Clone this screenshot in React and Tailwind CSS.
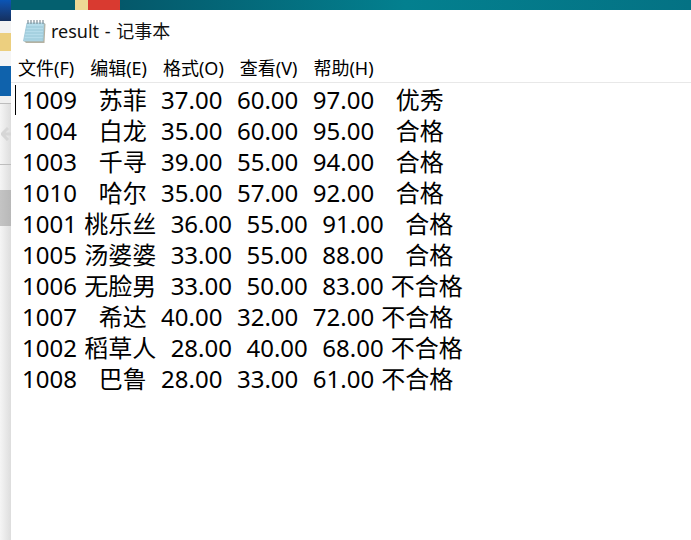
const rows = [
  "1009   苏菲  37.00  60.00  97.00   优秀",
  "1004   白龙  35.00  60.00  95.00   合格",
  "1003   千寻  39.00  55.00  94.00   合格",
  "1010   哈尔  35.00  57.00  92.00   合格",
  "1001 桃乐丝  36.00  55.00  91.00   合格",
  "1005 汤婆婆  33.00  55.00  88.00   合格",
  "1006 无脸男  33.00  50.00  83.00 不合格",
  "1007   希达  40.00  32.00  72.00 不合格",
  "1002 稻草人  28.00  40.00  68.00 不合格",
  "1008   巴鲁  28.00  33.00  61.00 不合格",
];

function NotepadIcon() {
  return (
    <svg width="24" height="25" viewBox="0 0 24 25" className="shrink-0">
      <path d="M22 4 L23.5 5 L22.5 24 L4 24 L2 22 L20 21 Z" fill="#b5b2a2" />
      <path d="M5 4 L22 4 L21 22 L1.5 22 Z" fill="#b5dcea" stroke="#9cc5d6" strokeWidth="0.8" />
      <path d="M4 8 H21 M3.6 11 H21 M3.2 14 H21 M2.8 17 H21 M2.4 20 H21" stroke="#8fc0d2" strokeWidth="0.8" />
      <path d="M6 1 V5 M9 1 V5 M12 1 V5 M15 1 V5 M18 1 V5 M21 1 V5" stroke="#7f8f98" strokeWidth="1.2" />
    </svg>
  );
}

export default function App() {
  const font = { fontFamily: '"Noto Sans", "Noto Sans CJK SC", sans-serif' };
  return (
    <div className="w-[691px] h-[540px] overflow-hidden flex bg-white" style={font}>
      <div className="w-[11px] shrink-0 flex flex-col">
        <div className="h-[21px] bg-gradient-to-b from-[#0a55b5] to-[#14305f]" />
        <div className="h-[12px] bg-[#f3f3f3]" />
        <div className="h-[18px] bg-[#eccf7f]" />
        <div className="h-[15px] bg-[#f5f5f5]" />
        <div className="h-[30px] bg-[#0f62ac]" />
        <div className="h-[8px] bg-[#f0f0f0] border-b border-[#bdbdbd]" />
        <div className="h-[61px] flex items-center bg-gradient-to-r from-[#f5f5f5] to-[#dddddd] border-b border-[#bdbdbd]">
          <svg width="10" height="14" viewBox="0 0 10 14" className="ml-[1px]">
            <path d="M7 1 L1 7 L7 13 M1 7 H10" fill="none" stroke="#d6d6d6" strokeWidth="3" />
          </svg>
        </div>
        <div className="h-[25px] bg-gradient-to-r from-[#f5f5f5] to-[#dddddd]" />
        <div className="h-[36px] bg-gradient-to-r from-[#c4c4c4] to-[#b8b8b8]" />
        <div className="flex-1 bg-gradient-to-r from-[#f5f5f5] to-[#dddddd]" />
      </div>
      <div className="flex-1 flex flex-col min-w-0">
        <div className="h-[10px] shrink-0 flex bg-[#046d80]">
          <div className="w-[64px] bg-[#04606f]" />
          <div className="w-[13px] bg-[#eed995]" />
          <div className="w-[32px] bg-[#d93a30]" />
          <div className="flex-1 bg-gradient-to-r from-[#04586a] via-[#03808f] to-[#047284]" />
        </div>
        <div className="h-[43px] shrink-0 flex items-center pl-[11px] gap-[5px] text-[18px] text-[#111]">
          <NotepadIcon />
          <span className="whitespace-pre [word-spacing:1px]">result - 记事本</span>
        </div>
        <div className="h-[30px] shrink-0 flex items-center pl-[7px] pt-[1px] gap-[16px] text-[18px] text-black border-b border-[#e8e8e8]">
          <span>文件(F)</span>
          <span>编辑(E)</span>
          <span>格式(O)</span>
          <span>查看(V)</span>
          <span>帮助(H)</span>
        </div>
        <div className="relative flex-1 pl-[11px] pt-[1px] text-[24px] leading-[31px] text-black whitespace-pre [word-spacing:1px]">
          <div className="absolute left-[4px] top-[2px] w-px h-[30px] bg-black" />
          {rows.map((r) => (
            <div key={r}>{r}</div>
          ))}
        </div>
      </div>
    </div>
  );
}
